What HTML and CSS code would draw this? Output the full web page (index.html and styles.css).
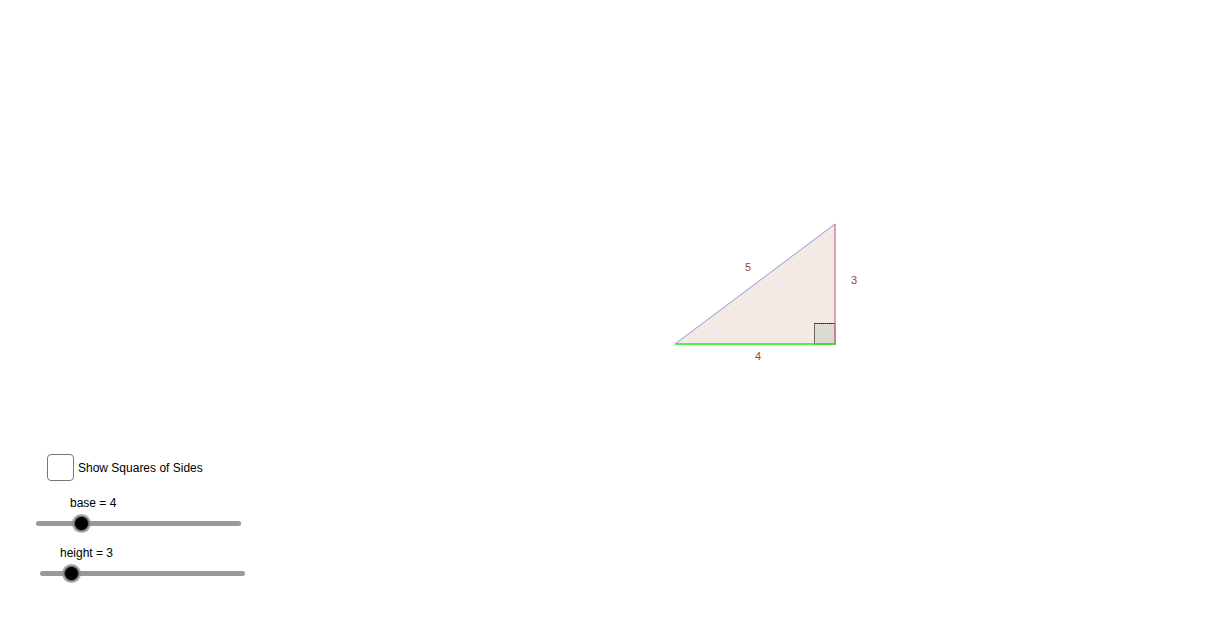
FILE: index.html
```html
<!DOCTYPE html>
<html>
<head>
<meta charset="utf-8">
<link rel="stylesheet" href="styles.css">
</head>
<body>
<div class="applet">
  <svg class="figure" width="1232" height="631" viewBox="0 0 1232 631">
    <polygon points="675,344 835,344 835,224" fill="#f3e9e5" stroke="none"/>
    <rect x="814.5" y="323.5" width="20.5" height="20.5" fill="#dcdbd0" stroke="#666" stroke-width="1"/>
    <line x1="815" y1="323.5" x2="835" y2="323.5" stroke="#222" stroke-width="1" stroke-dasharray="1,1"/>
    <line x1="675" y1="344" x2="835" y2="224" stroke="#8b97e0" stroke-width="1"/>
    <line x1="835" y1="224" x2="835" y2="344" stroke="#d4708a" stroke-width="1.3"/>
    <line x1="675" y1="344" x2="836" y2="344" stroke="#12f012" stroke-width="1.6"/>
    <text x="745" y="271" class="lbl">5</text>
    <text x="851" y="284" class="lbl">3</text>
    <text x="755" y="360" class="lbl">4</text>
  </svg>

  <label class="check">
    <span class="box"></span>
    <span class="check-text">Show Squares of Sides</span>
  </label>

  <div class="slider s-base">
    <div class="slider-label">base = 4</div>
    <div class="track"><span class="knob" style="left:45.5px"></span></div>
  </div>

  <div class="slider s-height">
    <div class="slider-label">height = 3</div>
    <div class="track"><span class="knob" style="left:31.5px"></span></div>
  </div>
</div>
</body>
</html>
```
FILE: styles.css
```css
html, body {
  margin: 0;
  padding: 0;
  background: #ffffff;
}
.applet {
  position: relative;
  width: 1232px;
  height: 631px;
  overflow: hidden;
  font-family: "Liberation Sans", Arial, sans-serif;
  color: #000;
}
.figure {
  position: absolute;
  left: 0;
  top: 0;
}
.lbl {
  font-family: "Liberation Sans", Arial, sans-serif;
  font-size: 11px;
  fill: #a8431d;
}
.check {
  position: absolute;
  left: 47px;
  top: 454px;
  display: flex;
  align-items: center;
  gap: 4px;
}
.box {
  width: 25px;
  height: 25px;
  border: 1px solid #777;
  border-radius: 4px;
  background: #fff;
}
.check-text {
  font-size: 12px;
  margin-top: 1px;
}
.slider {
  position: absolute;
  width: 205px;
}
.s-base {
  left: 36px;
  top: 496px;
}
.s-height {
  left: 40px;
  top: 546px;
}
.slider-label {
  font-size: 12px;
  line-height: 14px;
}
.s-base .slider-label { margin-left: 34px; }
.s-height .slider-label { margin-left: 20px; }
.track {
  position: relative;
  margin-top: 11px;
  height: 5px;
  border-radius: 3px;
  background: #999999;
}
.knob {
  position: absolute;
  top: -4px;
  width: 13px;
  height: 13px;
  margin-left: -6.5px;
  border-radius: 50%;
  background: #000;
  box-shadow: 0 0 0 1px #555, 0 0 0 3px rgba(140,140,140,0.75);
}
```
